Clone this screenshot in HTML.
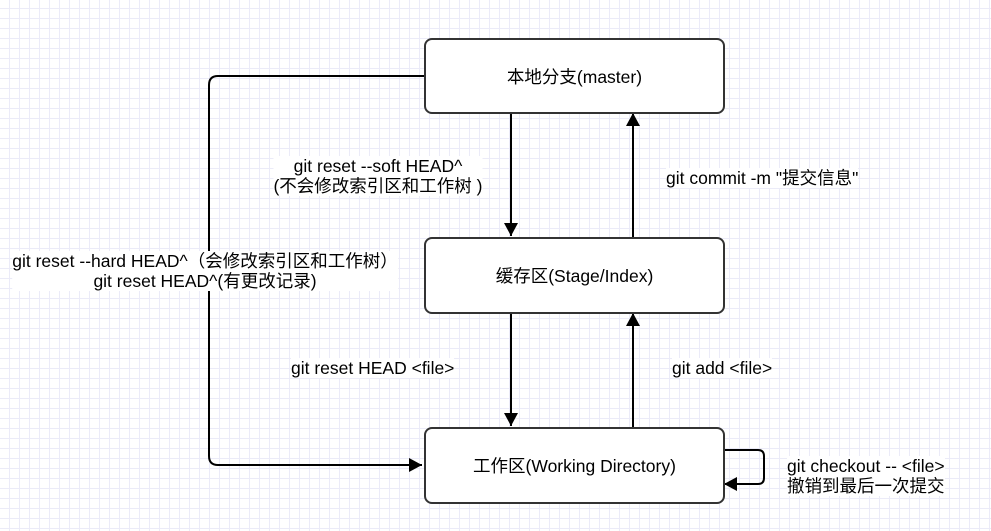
<!DOCTYPE html>
<html><head><meta charset="utf-8"><style>
body{margin:0;width:991px;height:531px;overflow:hidden;background:#fff;
background-image:linear-gradient(#ebebf8 1px,transparent 1px),linear-gradient(90deg,#ebebf8 1px,transparent 1px);background-size:10px 10px;background-position:-1px -2px;
font-family:"Liberation Sans","Noto Sans CJK SC",sans-serif;font-size:17.5px;color:#000;position:relative}
.b{position:absolute;left:424px;width:297px;border:2px solid #333;border-radius:8px;background:#fff;display:flex;align-items:center;justify-content:center}
.t{position:absolute;background:#fff;text-align:center;line-height:20px;white-space:nowrap}
.c{transform:translateX(-50%)}
svg{position:absolute;left:0;top:0}
</style></head><body>
<svg width="991" height="531">
<defs><marker id="a" markerWidth="14" markerHeight="14" refX="13" refY="7" orient="auto" markerUnits="userSpaceOnUse"><path d="M0,0L13,7L0,14z" fill="#000"/></marker></defs>
<g stroke="#000" stroke-width="2" fill="none">
<path d="M424,76H218Q209,76 209,85V456Q209,465 218,465H422" marker-end="url(#a)"/>
<path d="M511,113V236" marker-end="url(#a)"/>
<path d="M633,237V113" marker-end="url(#a)"/>
<path d="M511,313V426" marker-end="url(#a)"/>
<path d="M633,427V313" marker-end="url(#a)"/>
<path d="M724,450H758Q764,450 764,456V478Q764,484 758,484H724" marker-end="url(#a)"/>
</g></svg>
<div class="b" style="top:38px;height:72px">本地分支(master)</div>
<div class="b" style="top:237px;height:73px">缓存区(Stage/Index)</div>
<div class="b" style="top:427px;height:73px">工作区(Working Directory)</div>
<div class="t c" style="left:378px;top:156px">git reset --soft HEAD^<br>(不会修改索引区和工作树 )</div>
<div class="t" style="left:666px;top:168px">git commit -m "提交信息"</div>
<div class="t c" style="left:205px;top:251px">git reset --hard HEAD^（会修改索引区和工作树）<br>git reset HEAD^(有更改记录)</div>
<div class="t" style="left:291px;top:358px">git reset HEAD &lt;file&gt;</div>
<div class="t" style="left:672px;top:358px">git add &lt;file&gt;</div>
<div class="t" style="left:787px;top:456px">git checkout -- &lt;file&gt;<br>撤销到最后一次提交</div>
</body></html>
